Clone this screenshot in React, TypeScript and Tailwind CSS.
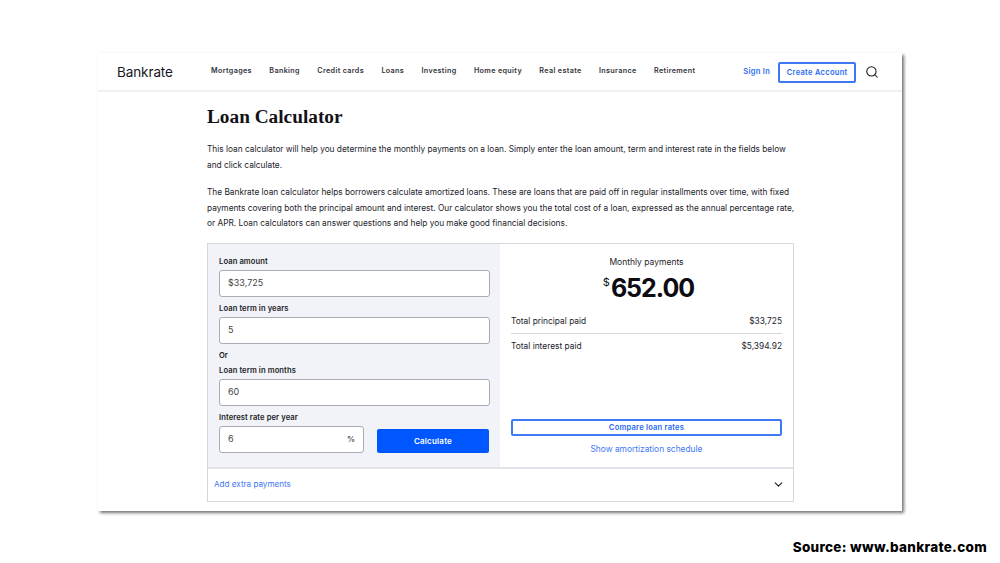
import { ChevronDown, Search } from 'lucide-react';

const navItems = ['Mortgages', 'Banking', 'Credit cards', 'Loans', 'Investing', 'Home equity', 'Real estate', 'Insurance', 'Retirement'];

function Field({ label, value, className, suffix }: { label: string; value: string; className: string; suffix?: string }) {
  return (
    <div className={className}>
      <div className="text-[7.6px] leading-[10px] font-semibold text-[#1c1c24] tracking-[0.1px]">{label}</div>
      <div className="mt-[3px] h-[27px] rounded-[3px] border border-[#a9acb4] bg-white pl-[8px] pr-[8px] flex items-center justify-between text-[9px] text-[#444]">
        <span>{value}</span>
        {suffix && <span className="font-semibold text-[8px] text-[#555]">{suffix}</span>}
      </div>
    </div>
  );
}

export default function App() {
  return (
    <div className="w-[1000px] h-[563px] bg-white overflow-hidden font-['Inter',sans-serif] pt-[53px] pl-[98px]">
      <div className="w-[804px] h-[458px] bg-white shadow-[2px_2px_3px_rgba(0,0,0,0.55)]">
        <header className="h-[39px] border-b-[2px] border-[#f0f0f0] flex items-start pl-[19px]">
          <div className="w-[94px] mt-[9px] text-[13.5px] leading-[20px] tracking-[-0.1px] text-[#16161d]">Bankrate</div>
          <nav className="flex gap-[17.4px] mt-[12px] text-[7.2px] leading-[12px] font-semibold tracking-[0.35px] text-[#33333b]">
            {navItems.map((n) => (
              <span key={n}>{n}</span>
            ))}
          </nav>
          <span className="ml-[48px] mt-[13px] text-[7.5px] leading-[12px] font-semibold tracking-[0.3px] text-[#2a6bf2]">Sign In</span>
          <div className="ml-[8px] mt-[9px] w-[78px] h-[21px] rounded-[2px] border-2 border-[#3f78f5] flex items-center justify-center text-[7.5px] font-semibold tracking-[0.3px] text-[#2a6bf2]">Create Account</div>
          <Search className="ml-[9px] mt-[12px] text-[#1a1a1a]" size={14} strokeWidth={1.8} />
        </header>

        <main className="pl-[109px] w-[710px]">
          <h1 className="mt-[12px] text-[19.3px] leading-[26px] font-bold font-['Liberation_Serif',serif] text-[#121217]">Loan Calculator</h1>
          <p className="mt-[12px] text-[8.3px] leading-[15.5px] text-[#23232b]">
            This loan calculator will help you determine the monthly payments on a loan. Simply enter the loan amount, term and interest rate in the fields below
            <br />
            and click calculate.
          </p>
          <p className="mt-[12px] text-[8.3px] leading-[15.5px] text-[#23232b]">
            The Bankrate loan calculator helps borrowers calculate amortized loans. These are loans that are paid off in regular installments over time, with fixed
            <br />
            payments covering both the principal amount and interest. Our calculator shows you the total cost of a loan, expressed as the annual percentage rate,
            <br />
            or APR. Loan calculators can answer questions and help you make good financial decisions.
          </p>

          <section className="mt-[11px] w-[587px] h-[259px] border border-[#d5d7df]">
            <div className="flex h-[223px]">
              <div className="w-[292px] bg-[#f1f3f8] pt-[13px] pl-[11px] pr-[10px]">
                <Field label="Loan amount" value="$33,725" className="" />
                <Field label="Loan term in years" value="5" className="mt-[7px]" />
                <div className="mt-[7px] text-[7.6px] leading-[10px] font-semibold text-[#1c1c24]">Or</div>
                <Field label="Loan term in months" value="60" className="mt-[5px]" />
                <div className="mt-[7px] flex items-end">
                  <Field label="Interest rate per year" value="6" suffix="%" className="w-[145px]" />
                  <button className="ml-[13px] w-[112px] h-[24px] rounded-[2px] bg-[#0157ff] text-white text-[8px] font-semibold tracking-[0.2px]">Calculate</button>
                </div>
              </div>
              <div className="w-[293px] px-[11px] pt-[13px] flex flex-col">
                <div className="text-center text-[8.5px] leading-[10px] text-[#23232b]">Monthly payments</div>
                <div className="mt-[6px] pl-[4px] flex justify-center items-start text-[#0c0c12] font-bold">
                  <span className="text-[11px] leading-[14px] mt-[2px] font-normal mr-[1px]">$</span>
                  <span className="text-[25px] leading-[30px] tracking-[-1px]">652.00</span>
                </div>
                <div className="mt-[12px] pb-[6px] border-b border-[#d5d7df] flex justify-between text-[8.4px] leading-[12px] text-[#23232b]">
                  <span>Total principal paid</span><span>$33,725</span>
                </div>
                <div className="mt-[6px] flex justify-between text-[8.4px] leading-[12px] text-[#23232b]">
                  <span>Total interest paid</span><span>$5,394.92</span>
                </div>
                <div className="mt-[67px] h-[17px] rounded-[2px] border-2 border-[#3f78f5] flex items-center justify-center text-[7.6px] leading-[13px] pt-[1px] font-semibold tracking-[0.2px] text-[#2a6bf2]">Compare loan rates</div>
                <div className="mt-[7px] text-center text-[8.4px] leading-[12px] text-[#3f76f5]">Show amortization schedule</div>
              </div>
            </div>
            <div className="h-[34px] border-t-[2px] border-[#e2e4ea] flex items-center justify-between pl-[6px] pr-[8px] text-[8.1px] text-[#3f76f5]">
              <span>Add extra payments</span>
              <ChevronDown size={13} strokeWidth={2} className="text-[#1a1a1a]" />
            </div>
          </section>
        </main>
      </div>
      <div className="mt-[28px] w-[889px] text-right text-[13.5px] leading-[16px] font-extrabold tracking-[0.3px] text-black">Source: www.bankrate.com</div>
    </div>
  );
}
